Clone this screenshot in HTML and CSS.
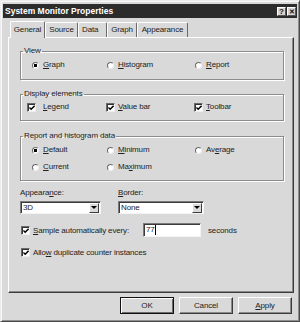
FILE: index.html
```html
<!DOCTYPE html>
<html>
<head>
<meta charset="utf-8">
<link rel="stylesheet" href="styles.css">
</head>
<body>
<div class="dialog">
  <div class="titlebar">
    <span class="title">System Monitor Properties</span>
    <span class="tbtns"><span class="tbtn">?</span><span class="tbtn x">✕</span></span>
  </div>
  <div class="tabs">
    <div class="tab sel t-general">General</div>
    <div class="tab t-source">Source</div>
    <div class="tab t-data">Data</div>
    <div class="tab t-graph">Graph</div>
    <div class="tab t-appear">Appearance</div>
  </div>
  <div class="panel">
    <fieldset class="group radios g-view">
      <legend>View</legend>
      <div class="opts">
        <label class="opt"><span class="radio on"></span><span><u>G</u>raph</span></label>
        <label class="opt"><span class="radio"></span><span><u>H</u>istogram</span></label>
        <label class="opt"><span class="radio"></span><span><u>R</u>eport</span></label>
      </div>
    </fieldset>
    <fieldset class="group checks g-display">
      <legend>Display elements</legend>
      <div class="opts">
        <label class="opt"><span class="check"><svg viewBox="0 0 7 7"><path d="M0.5 3 L2.5 5 L6.5 1" /></svg></span><span><u>L</u>egend</span></label>
        <label class="opt"><span class="check"><svg viewBox="0 0 7 7"><path d="M0.5 3 L2.5 5 L6.5 1" /></svg></span><span><u>V</u>alue bar</span></label>
        <label class="opt"><span class="check"><svg viewBox="0 0 7 7"><path d="M0.5 3 L2.5 5 L6.5 1" /></svg></span><span><u>T</u>oolbar</span></label>
      </div>
    </fieldset>
    <fieldset class="group radios g-report">
      <legend>Report and histogram data</legend>
      <div class="opts two">
        <label class="opt"><span class="radio on"></span><span><u>D</u>efault</span></label>
        <label class="opt"><span class="radio"></span><span><u>M</u>inimum</span></label>
        <label class="opt"><span class="radio"></span><span>Av<u>e</u>rage</span></label>
        <label class="opt"><span class="radio"></span><span><u>C</u>urrent</span></label>
        <label class="opt"><span class="radio"></span><span>Ma<u>x</u>imum</span></label>
      </div>
    </fieldset>
    <div class="combos">
      <div class="combo-col c1">
        <div class="lbl">Appeara<u>n</u>ce:</div>
        <div class="select"><span class="val">3D</span><span class="arrow"></span></div>
      </div>
      <div class="combo-col c2">
        <div class="lbl"><u>B</u>order:</div>
        <div class="select"><span class="val">None</span><span class="arrow"></span></div>
      </div>
    </div>
    <div class="row sample">
      <span class="check"><svg viewBox="0 0 7 7"><path d="M0.5 3 L2.5 5 L6.5 1" /></svg></span>
      <span class="rtext"><u>S</u>ample automatically every:</span>
      <span class="input">77<span class="caret"></span></span>
      <span class="secs">seconds</span>
    </div>
    <div class="row allow">
      <span class="check"><svg viewBox="0 0 7 7"><path d="M0.5 3 L2.5 5 L6.5 1" /></svg></span>
      <span class="rtext">Allo<u>w</u> duplicate counter instances</span>
    </div>
  </div>
  <div class="buttons">
    <span class="btn def"><span>OK</span></span>
    <span class="btn"><span>Cancel</span></span>
    <span class="btn"><span><u>A</u>pply</span></span>
  </div>
</div>
</body>
</html>
```

FILE: styles.css
```css
* { box-sizing: border-box; }
html, body { margin: 0; padding: 0; background: #e6e6e6; }
body {
  font-family: "Liberation Sans", Arial, sans-serif;
  font-size: 8px;
  letter-spacing: -0.15px;
  color: #222;
  width: 300px;
  height: 322px;
  overflow: hidden;
}
u { text-decoration: underline; text-underline-offset: 1px; }

.dialog {
  width: 300px;
  height: 322px;
  background: #d9d9d9;
  border-top: 1px solid #ececec;
  border-left: 1px solid #ececec;
  border-right: 1px solid #4a4a4a;
  border-bottom: 1px solid #4a4a4a;
  box-shadow: inset 1px 1px 0 #f8f8f8, inset -1px -1px 0 #8e8e8e;
  padding: 3px 2px 0 2px;
  display: flex;
  flex-direction: column;
}

.titlebar {
  height: 14px;
  background: #2c2c2c;
  display: flex;
  align-items: center;
  justify-content: space-between;
  padding: 0 1px 0 2px;
}
.title {
  color: #fff;
  font-weight: bold;
  font-size: 8.5px;
  letter-spacing: 0;
}
.tbtns { display: flex; gap: 1px; }
.tbtn {
  width: 9px;
  height: 9px;
  background: #d4d4d4;
  border-top: 1px solid #fff;
  border-left: 1px solid #fff;
  border-right: 1px solid #555;
  border-bottom: 1px solid #555;
  font-size: 8px;
  font-weight: bold;
  line-height: 7px;
  text-align: center;
  color: #111;
  letter-spacing: 0;
}
.tbtn.x { font-size: 7px; }

.tabs {
  display: flex;
  align-items: flex-end;
  height: 17px;
  margin-top: 2px;
  padding-left: 7px;
}
.tab {
  height: 15px;
  line-height: 14px;
  text-align: center;
  border-top: 1px solid #fff;
  border-left: 1px solid #fff;
  border-right: 1px solid #6a6a6a;
  border-top-left-radius: 2px;
  border-top-right-radius: 2px;
  background: #d9d9d9;
  position: relative;
  white-space: nowrap;
}
.tab.sel {
  height: 17px;
  line-height: 15px;
  margin-bottom: -1px;
  z-index: 1;
}
.t-general { width: 35px; }
.t-source { width: 33px; }
.t-data { width: 29px; text-align: left; padding-left: 3px; }
.t-graph { width: 30px; }
.t-appear { width: 51px; }

.panel {
  margin: 0 3px 0 5px;
  height: 256px;
  border-top: 1px solid #fff;
  border-left: 1px solid #fff;
  border-right: 1px solid #3c3c3c;
  border-bottom: 1px solid #3c3c3c;
  box-shadow: inset -1px -1px 0 #8a8a8a;
  padding: 0 9px 0 11px;
}

.group {
  margin: 0;
  border: 1px solid #8c8c8c;
  box-shadow: inset 1px 1px 0 #fff, 1px 1px 0 #fff;
  padding: 0;
  min-width: 0;
}
.group legend {
  padding: 0 1px;
  line-height: 10px;
}
.radios legend { margin-left: -9px; }
.checks legend { margin-left: -4px; }
.g-view { margin-top: 8px; padding: 3px 0 8px 11px; }
.g-display { margin-top: 9px; padding: 2px 0 7px 6px; }
.g-report { margin-top: 10px; padding: 3px 0 7px 11px; }

.opts {
  display: grid;
  grid-template-columns: 75px 88px auto;
  row-gap: 5px;
}
.checks .opts { grid-template-columns: 79px 88px auto; }
.opt {
  display: flex;
  align-items: center;
  height: 12px;
  line-height: 12px;
}
.radio {
  width: 7px;
  height: 7px;
  border-radius: 50%;
  background: #fff;
  border-top: 1px solid #6a6a6a;
  border-left: 1px solid #6a6a6a;
  border-right: 1px solid #eee;
  border-bottom: 1px solid #eee;
  margin-right: 4px;
  flex: none;
}
.radio.on {
  background: radial-gradient(circle, #000 0 1.4px, #fff 1.9px);
}
.check {
  width: 9px;
  height: 9px;
  background: #fff;
  border-top: 1px solid #6a6a6a;
  border-left: 1px solid #6a6a6a;
  border-right: 1px solid #eee;
  border-bottom: 1px solid #eee;
  box-shadow: inset 1px 1px 0 #333;
  margin-right: 7px;
  flex: none;
  display: flex;
  align-items: center;
  justify-content: center;
}
.checks .opt:nth-child(n+2) .check { margin-right: 3px; }
.check svg { width: 6px; height: 6px; margin: 1px 0 0 1px; }
.check path { fill: none; stroke: #000; stroke-width: 1.6; }

.combos { display: flex; margin-top: 7px; }
.combo-col { display: flex; flex-direction: column; gap: 3px; }
.c1 { width: 98px; }
.c1 .select { width: 81px; }
.c2 .select { width: 86px; }
.lbl { line-height: 10px; }
.select {
  height: 13px;
  background: #fff;
  border-top: 1px solid #7a7a7a;
  border-left: 1px solid #7a7a7a;
  border-right: 1px solid #f4f4f4;
  border-bottom: 1px solid #f4f4f4;
  box-shadow: inset 1px 1px 0 #3a3a3a;
  display: flex;
  align-items: center;
  justify-content: space-between;
  padding: 0 1px 0 2px;
}
.val { line-height: 11px; }
.arrow {
  width: 10px;
  height: 10px;
  background: #d9d9d9;
  border-top: 1px solid #fff;
  border-left: 1px solid #fff;
  border-right: 1px solid #3c3c3c;
  border-bottom: 1px solid #3c3c3c;
  display: flex;
  align-items: center;
  justify-content: center;
}
.arrow::after {
  content: "";
  border-left: 3px solid transparent;
  border-right: 3px solid transparent;
  border-top: 3px solid #000;
}

.row { display: flex; align-items: center; white-space: nowrap; }
.sample { margin-top: 9px; height: 14px; margin-left: 1px; }
.allow { margin-top: 9px; height: 12px; margin-left: 1px; }
.row .check { margin-right: 3px; }
.sample .rtext { width: 110px; }
.input {
  width: 58px;
  height: 14px;
  background: #fff;
  border-top: 1px solid #7a7a7a;
  border-left: 1px solid #7a7a7a;
  border-right: 1px solid #f4f4f4;
  border-bottom: 1px solid #f4f4f4;
  box-shadow: inset 1px 1px 0 #3a3a3a;
  padding-left: 2px;
  line-height: 12px;
  display: flex;
  align-items: center;
}
.caret { width: 1px; height: 10px; background: #000; margin-left: 0; }
.secs { margin-left: 7px; }

.buttons {
  display: flex;
  justify-content: flex-end;
  gap: 5px;
  margin: 4px 5px 0 0;
}
.btn {
  width: 54px;
  height: 17px;
  background: #d9d9d9;
  border-top: 1px solid #fff;
  border-left: 1px solid #fff;
  border-right: 1px solid #3c3c3c;
  border-bottom: 1px solid #3c3c3c;
  box-shadow: inset -1px -1px 0 #8a8a8a;
  display: flex;
  align-items: center;
  justify-content: center;
  line-height: 12px;
}
.btn.def {
  border: 1px solid #111;
  box-shadow: inset 1px 1px 0 #fff, inset -1px -1px 0 #6a6a6a;
}
```
